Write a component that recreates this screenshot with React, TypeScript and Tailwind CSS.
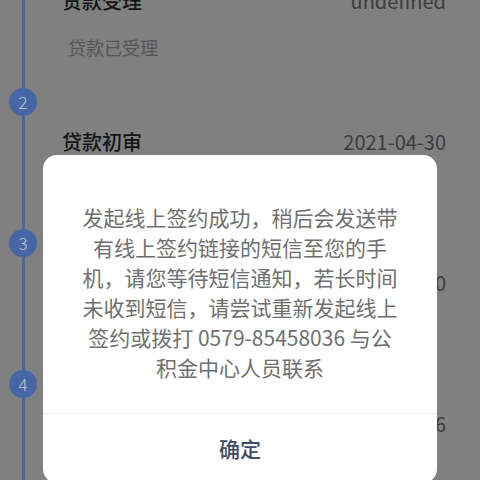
const steps = [
  { no: 1, title: '贷款受理', date: 'undefined', note: '贷款已受理' },
  { no: 2, title: '贷款初审', date: '2021-04-30', note: '' },
  { no: 3, title: '贷款复审', date: '2021-04-30', note: '' },
  { no: 4, title: '签约', date: '2021-05-06', note: '' },
]

const StepRow = ({ no, title, date, note }: { no: number; title: string; date: string; note: string }) => {
  return (
    <div className="flex h-[141px]">
      <div className="w-[46px] flex flex-col items-center">
        <div className="w-[28px] h-[28px] rounded-full bg-[#4766a6] flex items-center justify-center text-[17px] font-light text-[#c3cbdd]">
          {no}
        </div>
        <div className="flex-1 w-[3px] bg-[#4a64a0]" />
      </div>
      <div className="flex-1 pl-[16px] pr-[34px] pt-[40px]">
        <div className="flex items-center justify-between h-[28px]">
          <span className="text-[20px] font-medium text-[#141414]">{title}</span>
          <span className="text-[20px] text-[#3c3c3c]">{date}</span>
        </div>
        {note && <p className="mt-[20px] ml-[6px] text-[18px] leading-[24px] text-[#555555]">{note}</p>}
      </div>
    </div>
  )
}

const App: React.FC = () => {
  return (
    <div
      className="relative w-[480px] h-[480px] overflow-hidden bg-[#808080]"
      style={{ fontFamily: '"Noto Sans CJK SC", "Noto Sans", sans-serif' }}
    >
      <div className="-mt-[53px]">
        {steps.map((s) => (
          <StepRow key={s.no} {...s} />
        ))}
      </div>

      {/* dialog */}
      <div className="absolute left-[43px] top-[155px] w-[394px] bg-white rounded-[14px] overflow-hidden">
        <div className="pt-[47px] pb-[31px] flex justify-center">
          <p className="w-[318px] text-center text-[21px] leading-[30px] text-[#6f6f6f]">
            发起线上签约成功，稍后会发送带有线上签约链接的短信至您的手机，请您等待短信通知，若长时间未收到短信，请尝试重新发起线上签约或拨打 0579-85458036 与公积金中心人员联系
          </p>
        </div>
        <div className="h-px bg-[#ececec]" />
        <button type="button" className="w-full h-[69px] text-[21px] font-medium text-[#3d4b66]">
          确定
        </button>
      </div>
    </div>
  )
}

export default App
